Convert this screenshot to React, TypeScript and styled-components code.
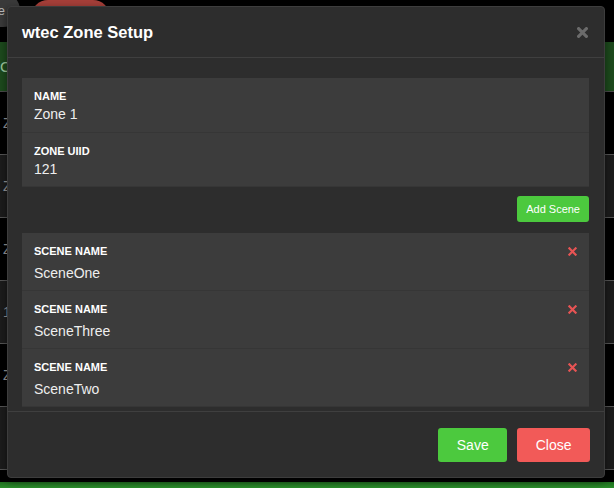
import React from "react";
import styled, { createGlobalStyle } from "styled-components";

const Global = createGlobalStyle`
  html, body { margin: 0; padding: 0; background: #000; }
  body { font-family: "Liberation Sans", Arial, Helvetica, sans-serif; overflow: hidden; }
  * { box-sizing: border-box; }
`;

const Page = styled.div`
  position: relative;
  width: 614px;
  height: 488px;
  background: #000;
  overflow: hidden;
`;

const TopBar = styled.div`
  display: flex;
  align-items: flex-start;
  gap: 11px;
  height: 27px;
  margin-left: -22px;
`;

const Pill = styled.div<{ $bg: string; $w: number; $h: number; $top: number }>`
  width: ${(p) => p.$w}px;
  height: ${(p) => p.$h}px;
  margin-top: ${(p) => p.$top}px;
  border-radius: ${(p) => p.$h / 2}px;
  background: ${(p) => p.$bg};
  color: #bbb;
  font-size: 13px;
  display: flex;
  align-items: center;
  justify-content: flex-end;
  padding: 0 15px 0 0;
`;

const GreenBand = styled.div`
  margin-top: 15px;
  height: 50px;
  background: #1d4a1d;
  color: #9fc79f;
  font-size: 15px;
  display: flex;
  align-items: center;
  border-bottom: 1px solid #4a4a4a;
`;

const BgRow = styled.div<{ $alt: boolean }>`
  height: 63px;
  background: ${(p) => (p.$alt ? "#1c1c1c" : "#000")};
  border-bottom: 1px solid #555;
  color: #999;
  font-size: 14px;
  display: flex;
  align-items: center;
  padding-left: 3px;
`;

const BottomGreen = styled.div`
  position: absolute;
  left: 0;
  right: 0;
  bottom: 0;
  height: 6px;
  background: linear-gradient(#1f6e1f, #2b8f2b);
`;

const Modal = styled.div`
  position: absolute;
  top: 6px;
  left: 7px;
  width: 598px;
  height: 472px;
  background: #2d2d2d;
  border: 1px solid #3d3d3d;
  border-radius: 4px;
  display: flex;
  flex-direction: column;
  box-shadow: 0 3px 9px rgba(0, 0, 0, 0.5);
`;

const Header = styled.div`
  height: 51px;
  display: flex;
  align-items: center;
  justify-content: space-between;
  padding: 0 16px 0 14px;
  border-bottom: 1px solid #3f3f3f;
`;

const Title = styled.h4`
  margin: 0;
  font-size: 16.5px;
  font-weight: bold;
  color: #fff;
`;

const CloseX = styled.span`
  display: flex;
  margin-top: 1px;
`;

const Body = styled.div`
  flex: 1;
  padding: 20px 15px 5px 14px;
  display: flex;
  flex-direction: column;
`;

const Card = styled.div`
  border-radius: 2px;
  display: flex;
  flex-direction: column;
  gap: 1px;
`;

const Field = styled.div<{ $h: number }>`
  position: relative;
  height: ${(p) => p.$h}px;
  background: #3c3c3c;
  padding: 10px 12px 0;
  box-shadow: 0 1px 0 #363636;
`;

const Label = styled.div`
  font-size: 11px;
  font-weight: bold;
  color: #fff;
  line-height: 16px;
  text-transform: uppercase;
`;

const Value = styled.div<{ $gap: number }>`
  font-size: 14px;
  color: #eee;
  line-height: 20px;
  margin-top: ${(p) => p.$gap}px;
`;

const Remove = styled.span`
  position: absolute;
  top: 14px;
  right: 12px;
  width: 9px;
  height: 9px;
  display: flex;
`;

const ActionRow = styled.div`
  display: flex;
  justify-content: flex-end;
  padding: 10px 0 11px;
`;

const Button = styled.button<{ $bg: string; $small?: boolean }>`
  border: none;
  border-radius: 3px;
  background: ${(p) => p.$bg};
  color: #fff;
  font-family: "Liberation Sans", Arial, Helvetica, sans-serif;
  font-size: ${(p) => (p.$small ? 11 : 14)}px;
  height: ${(p) => (p.$small ? 26 : 34)}px;
  padding: 0 ${(p) => (p.$small ? 9 : 18.5)}px;
  cursor: pointer;
`;

const Footer = styled.div`
  height: 66px;
  border-top: 1px solid #3f3f3f;
  display: flex;
  justify-content: flex-end;
  align-items: center;
  gap: 10px;
  padding: 0 14px 0 0;
`;

const XIcon = ({ size, color, w }: { size: number; color: string; w: number }) => (
  <svg width={size} height={size} viewBox="0 0 10 10">
    <path d="M1.5 1.5 L8.5 8.5 M8.5 1.5 L1.5 8.5" stroke={color} strokeWidth={w} strokeLinecap="square" />
  </svg>
);

const scenes = ["SceneOne", "SceneThree", "SceneTwo"];
const bgRows = ["Z", "Z", "Z", "1", "Z", ""];

export default function App() {
  return (
    <Page>
      <Global />
      <TopBar>
        <Pill $bg="#3a3a3a" $w={42} $h={34} $top={-7}>e</Pill>
        <Pill $bg="#a63f39" $w={79} $h={34} $top={0} />
      </TopBar>
      <GreenBand>C</GreenBand>
      {bgRows.map((t, i) => (
        <BgRow key={i} $alt={i % 2 === 1}>{t}</BgRow>
      ))}
      <BottomGreen />
      <Modal>
        <Header>
          <Title>wtec Zone Setup</Title>
          <CloseX>
            <XIcon size={11} color="#6b6b6b" w={2.8} />
          </CloseX>
        </Header>
        <Body>
          <Card>
            <Field $h={54}>
              <Label>Name</Label>
              <Value $gap={0}>Zone 1</Value>
            </Field>
            <Field $h={53}>
              <Label>Zone UIID</Label>
              <Value $gap={0}>121</Value>
            </Field>
          </Card>
          <ActionRow>
            <Button $bg="#4cc93e" $small>Add Scene</Button>
          </ActionRow>
          <Card>
            {scenes.map((s) => (
              <Field key={s} $h={57}>
                <Label>Scene Name</Label>
                <Value $gap={4}>{s}</Value>
                <Remove>
                  <XIcon size={9} color="#e85454" w={2.4} />
                </Remove>
              </Field>
            ))}
          </Card>
        </Body>
        <Footer>
          <Button $bg="#4cc93e">Save</Button>
          <Button $bg="#f25a58">Close</Button>
        </Footer>
      </Modal>
    </Page>
  );
}
